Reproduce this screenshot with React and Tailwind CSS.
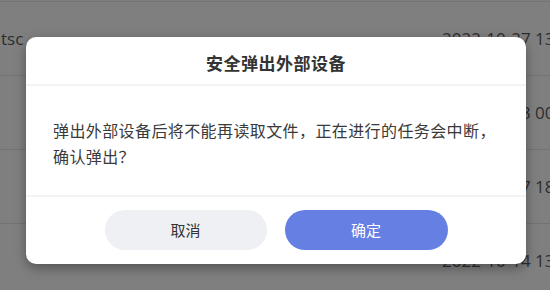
import React from "react";

const rows = [
  { left: "tsc", right: "2022-10-27 13:42" },
  { left: "", right: "2022-10-23 00:18" },
  { left: "", right: "2022-10-17 18:05" },
  { left: "", right: "2022-10-14 13:27" },
];

export default function App() {
  return (
    <div
      className="relative w-[550px] h-[290px] overflow-hidden bg-white"
      style={{ fontFamily: '"Open Sans", "Noto Sans CJK SC", sans-serif' }}
    >
      {/* background list */}
      <div className="flex flex-col pt-[1px]">
        {rows.map((r, i) => (
          <div
            key={i}
            className="flex items-center h-[74px] border-t border-[#e6e6e6] text-[17px] text-[#5c5c5c] whitespace-nowrap"
          >
            <div className="w-[442px] shrink-0 pl-[1px]">{r.left}</div>
            <div className="shrink-0">{r.right}</div>
          </div>
        ))}
      </div>

      {/* overlay */}
      <div className="absolute inset-0 bg-black/50" />

      {/* modal */}
      <div
        className="absolute left-[26px] top-[37px] w-[500px] bg-white rounded-[10px] shadow-[0_4px_12px_rgba(0,0,0,0.35)] flex flex-col"
        style={{ fontFamily: '"Noto Sans CJK SC", "Noto Sans", sans-serif' }}
      >
        <div className="pt-[14px] pb-[9px] text-center text-[17px] leading-[24px] font-bold text-[#333] tracking-[0.5px]">
          安全弹出外部设备
        </div>
        <div className="h-[2px] bg-[#f3f3f5]" />
        <div className="pt-[31px] pb-[26px] pl-[27px] pr-[20px] text-[16px] leading-[26px] text-[#3a3a3a] tracking-[0.4px]">
          弹出外部设备后将不能再读取文件，正在进行的任务会中断，确认弹出？
        </div>
        <div className="h-[2px] bg-[#f3f3f5]" />
        <div className="flex justify-center gap-[18px] pt-[13px] pb-[14px]">
          <button className="w-[162px] h-[40px] rounded-full bg-[#eff0f4] text-[#333] text-[15px]">
            取消
          </button>
          <button className="w-[163px] h-[40px] rounded-full bg-[#6580e2] text-white text-[15px]">
            确定
          </button>
        </div>
      </div>
    </div>
  );
}
